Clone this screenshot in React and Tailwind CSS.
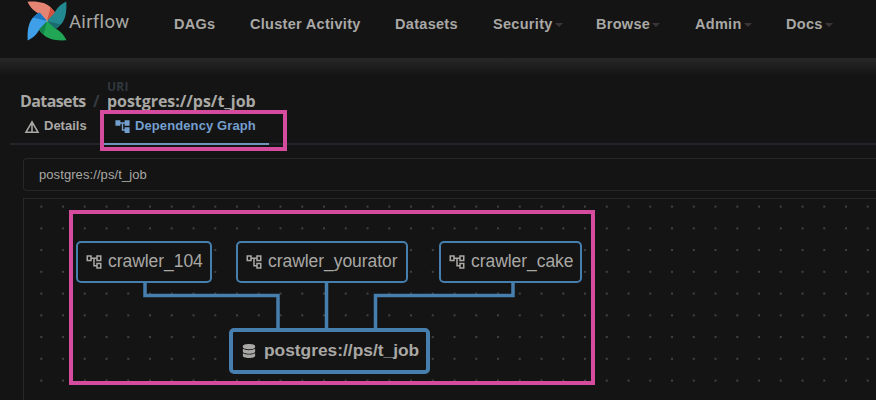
import { MdAccountTree, MdOutlineAccountTree } from "react-icons/md";
import { FaDatabase } from "react-icons/fa";

const blades = [
  { rot: 0, light: "#e38572", dark: "#cf5340" },
  { rot: 90, light: "#21898f", dark: "#1b6b70" },
  { rot: 180, light: "#21a655", dark: "#14844a" },
  { rot: 270, light: "#3f9fe8", dark: "#1b78c0" },
];

function Pinwheel() {
  return (
    <svg className="h-[40px] w-[40px] shrink-0" viewBox="-20 -20 40 40">
      {blades.map((b) => (
        <g key={b.rot} transform={`rotate(${b.rot})`}>
          <path d="M0 0 L-8 -7.5 C-12.5 -9.5 -16.5 -13 -19.5 -19.3 C-8 -20 0 -18 4.5 -12.8 C6.5 -11 7.8 -9 8.3 -7.2 Z" fill={b.light} />
          <path d="M0 0 L3.5 -13.8 C6 -11.5 7.8 -9.5 8.3 -7.2 Z" fill={b.dark} />
        </g>
      ))}
      <circle r="0.8" fill="#b9bcbd" />
    </svg>
  );
}

function NavItem({ label, className, caret }) {
  return (
    <div className={`flex shrink-0 items-center ${className}`}>
      <span>{label}</span>
      {caret && <span className="ml-[2px] mt-[2px] border-x-4 border-t-4 border-x-transparent border-t-[#3c343b]" />}
    </div>
  );
}

function DagNode({ label, className }) {
  return (
    <div className={`absolute flex h-[42px] items-center rounded-[5px] border-2 border-[#467eae] bg-[#141414] pl-[7px] text-[17.5px] tracking-[-0.05px] text-[#a9a8a5] ${className}`}>
      <MdOutlineAccountTree className="mr-[5px] h-[18px] w-[18px] shrink-0" />
      <span className="-mt-[2px] whitespace-nowrap">{label}</span>
    </div>
  );
}

export default function App() {
  return (
    <div className="relative h-[400px] w-[876px] overflow-hidden bg-[#141414] font-['Liberation_Sans',Arial,sans-serif] text-[#a9a8a5]">
      <header className="flex h-[58px] items-start text-[14.5px] font-bold leading-[16px]">
        <div className="ml-[27px] mt-[1px] flex w-[147px] shrink-0">
          <Pinwheel />
          <span className="ml-[2px] mt-[10px] font-[Roboto,sans-serif] text-[18.5px] font-normal leading-[22px] tracking-[0.3px]">Airflow</span>
        </div>
        <div className="mt-[16px] flex tracking-[0.3px]">
          <NavItem label="DAGs" className="w-[76px]" />
          <NavItem label="Cluster Activity" className="w-[145px]" />
          <NavItem label="Datasets" className="w-[98px]" />
          <NavItem label="Security" className="w-[103px]" caret />
          <NavItem label="Browse" className="w-[99px]" caret />
          <NavItem label="Admin" className="w-[91px]" caret />
          <NavItem label="Docs" className="w-[60px]" caret />
        </div>
      </header>
      <div className="h-[18px] bg-linear-to-b from-[#272727] to-[#141414]" />

      <main>
        <div className="ml-[20px] flex h-[34px] items-end font-['Open_Sans',sans-serif] text-[16px] font-bold leading-[18px]">
          <span className="w-[66px] shrink-0 tracking-[-0.6px]">Datasets</span>
          <span className="w-[21px] pl-[7px] text-[#343a40]">/</span>
          <div>
            <div className="-mb-[2px] text-[12px] leading-[14px] tracking-[0.2px] text-[#30373e]">URI</div>
            <div className="tracking-[-0.05px]">postgres://ps/t_job</div>
          </div>
        </div>

        <div className="ml-[10px] mt-[2px] flex h-[33px] border-b-2 border-[#22262b] text-[13px] font-bold leading-[16px]">
          <div className="flex w-[93px] shrink-0 pl-[14px] pt-[6px]">
            <svg className="mr-[4px] mt-[1px] h-[16px] w-[16px]" viewBox="0 0 16 16" fill="none" stroke="currentColor" strokeWidth="1.6">
              <path d="M8 2.8L2 13.2H14ZM8 3V13" />
            </svg>
            <span>Details</span>
          </div>
          <div className="-mb-[2px] flex w-[166px] border-b-2 border-[#7095bd] pl-[11px] pt-[6px] text-[#739fce]">
            <MdAccountTree className="mr-[4px] h-[17px] w-[17px]" />
            <span className="tracking-[0.1px]">Dependency Graph</span>
          </div>
        </div>

        <div className="ml-[23px] mt-[13px] flex h-[33px] items-center rounded-l-[4px] border border-r-0 border-[#26272a] pl-[15px] text-[13px] tracking-[0.08px]">
          postgres://ps/t_job
        </div>

        <section className="relative ml-[23px] mt-[7px] h-[202px] border-l border-t border-[#26272a]">
          <svg className="absolute left-0 top-0 h-[201px] w-[852px]" viewBox="24 199 852 201">
            <defs>
              <pattern id="dots" x="30.4" y="195.7" width="21.75" height="21.75" patternUnits="userSpaceOnUse">
                <circle cx="10.9" cy="10.9" r="0.75" fill="#85858a" />
              </pattern>
            </defs>
            <rect x="24" y="199" width="852" height="201" fill="url(#dots)" />
            <g fill="none" stroke="#467eae" strokeWidth="3.5">
              <path d="M145 283V295.5H278V330" />
              <path d="M326.5 283V330" />
              <path d="M513 283V295.5H375.5V330" />
            </g>
          </svg>
          <DagNode label="crawler_104" className="left-[52px] top-[42px] w-[136px]" />
          <DagNode label="crawler_yourator" className="left-[212px] top-[42px] w-[172px]" />
          <DagNode label="crawler_cake" className="left-[415px] top-[42px] w-[143px]" />
          <div className="absolute left-[205px] top-[129px] flex h-[46px] w-[201px] items-center rounded-[5px] border-4 border-[#467eae] bg-[#141414] pl-[8px] text-[17.35px] font-bold">
            <FaDatabase className="ml-[1px] mr-[8px] h-[14px] w-[14px] shrink-0" />
            <span className="-mt-[2px] whitespace-nowrap">postgres://ps/t_job</span>
          </div>
        </section>
      </main>

      <div className="absolute left-[100px] top-[110px] h-[41px] w-[187px] border-4 border-[#d54c9f]" />
      <div className="absolute left-[69px] top-[210px] h-[175px] w-[526px] border-4 border-[#d54c9f]" />
    </div>
  );
}
